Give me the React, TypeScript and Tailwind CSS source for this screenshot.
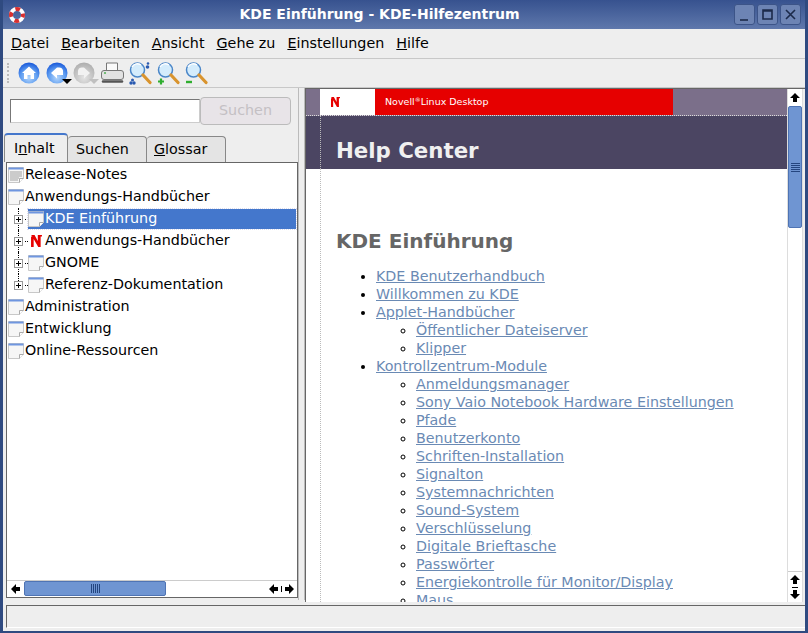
import React from "react";

const NLogo = ({ className }: { className?: string }) => (
  <svg viewBox="0 0 10 11" className={className}>
    <path d="M0 0h3.200l3 5.500V0H10v1.300H8.800V11H6.600L2.400 3.600V11H0V1.300h1.100V1.200z" fill="#e60000" />
  </svg>
);

const DocIcon = ({ lines }: { lines?: boolean }) => (
  <svg viewBox="0 0 16 16" className="w-4 h-4 shrink-0">
    <path d="M0.500 0.500h15v11l-4 4h-11z" fill="#f6f6f6" stroke="#c8c8c8" />
    <rect x="0.500" y="0.500" width="15" height="2" fill="#6f96e0" />
    {lines && <path d="M2 5h12M2 7h12M2 9h12M2 11h9M2 13h8" stroke="#a0a0a0" />}
    <path d="M11.500 15.500v-4h4" fill="#fff" stroke="#aaa" />
  </svg>
);

const Arrow = ({ dir }: { dir: "up" | "down" | "left" | "right" }) => {
  const d = {
    up: "M5 0l5 5H7v4H3V5H0z",
    down: "M3 0h4v4h3l-5 5-5-5h3z",
    left: "M0 5l5-5v3h4v4H5v3z",
    right: "M10 5l-5-5v3H1v4h4v3z",
  }[dir];
  return (
    <svg viewBox="0 0 10 10" className="w-[10px] h-[10px]">
      <path d={d} fill="#000" />
    </svg>
  );
};

const RoundIcon = ({ children, disabled }: { children: React.ReactNode; disabled?: boolean }) => (
  <svg viewBox="0 0 22 22" className="w-[22px] h-[22px] shrink-0">
    <defs>
      <radialGradient id="blueBall" cx="50%" cy="72%" r="68%">
        <stop offset="0" stopColor="#b4d6fb" />
        <stop offset="0.6" stopColor="#5c9bf0" />
        <stop offset="1" stopColor="#1f5fdc" />
      </radialGradient>
      <radialGradient id="greyBall" cx="50%" cy="72%" r="68%">
        <stop offset="0" stopColor="#e4e4e4" />
        <stop offset="1" stopColor="#b0b0b0" />
      </radialGradient>
    </defs>
    <circle cx="11" cy="11" r="10.500" fill={disabled ? "url(#greyBall)" : "url(#blueBall)"} />
    {children}
  </svg>
);

const Magnifier = ({ extra }: { extra?: React.ReactNode }) => (
  <svg viewBox="0 0 23 23" className="w-[23px] h-[23px]">
    <circle cx="8.500" cy="8" r="7" fill="#d4ecfc" stroke="#4a86c8" strokeWidth="1.500" />
    <path d="M3 5a6 6 0 0 1 9-2" stroke="#fff" strokeWidth="1.500" fill="none" />
    <path d="M14 13l7 7.500" stroke="#d9942e" strokeWidth="3.200" strokeLinecap="round" />
    {extra}
  </svg>
);

const ScrollGrip = ({ vertical }: { vertical?: boolean }) => (
  <div className={vertical ? "flex flex-col gap-[1px]" : "flex gap-[1px]"}>
    {[0, 1, 2, 3, 4].map((i) => (
      <div key={i} className={vertical ? "w-[9px] h-[1px] bg-[#24457f]" : "w-[1px] h-[9px] bg-[#24457f]"} />
    ))}
  </div>
);

const TreeRow = ({ label, lines }: { label: string; lines?: boolean }) => (
  <div className="flex items-center h-[22px] pl-[1px] text-black">
    <DocIcon lines={lines} />
    <span className="ml-[1px]">{label}</span>
  </div>
);

const ChildRow = ({ label, selected, novell, last }: { label: string; selected?: boolean; novell?: boolean; last?: boolean }) => (
  <div className="flex items-center h-[22px] pl-[7px]">
    <div className="w-[8px] h-[22px] relative shrink-0 flex items-center">
      <div className={last ? "w-px h-[11px] self-start ml-[4px] border-l border-dotted border-black" : "w-px h-[22px] ml-[4px] border-l border-dotted border-black"} />
      <div className="absolute left-0 top-[7px] w-[9px] h-[9px] border border-[#999] bg-white flex items-center justify-center text-[9px] leading-none">
        <div className="w-[5px] h-px bg-black" />
        <div className="absolute w-px h-[5px] bg-black" />
      </div>
    </div>
    <div className="w-[3px] ml-[3px] border-t border-dotted border-black shrink-0" />
    <div className={selected ? "flex items-center h-[20px] w-[268px] bg-[#4477cc] text-white outline-1 outline-dotted outline-[#dde]" : "flex items-center h-[20px] text-black"}>
      {novell ? (
        <div className="w-4 h-4 shrink-0 flex items-center justify-center"><NLogo className="w-[11px] h-[12px]" /></div>
      ) : (
        <DocIcon />
      )}
      <span className="ml-[1px]">{label}</span>
    </div>
  </div>
);

const LinkItem = ({ label, sub }: { label: string; sub?: string[] }) => (
  <li className="list-disc">
    <a className="underline text-[#6a8ab4]">{label}</a>
    {sub && (
      <ul className="pl-[40px]">
        {sub.map((s) => (
          <li key={s} className="list-[circle]">
            <a className="underline text-[#6a8ab4]">{s}</a>
          </li>
        ))}
      </ul>
    )}
  </li>
);

const menuItems: [string, string][] = [
  ["D", "atei"],
  ["B", "earbeiten"],
  ["A", "nsicht"],
  ["G", "ehe zu"],
  ["E", "instellungen"],
  ["H", "ilfe"],
];

export default function App() {
  return (
    <div className="w-[808px] h-[633px] overflow-hidden flex flex-col bg-[#eeeeee] text-[14.3px] border-x-[3px] border-b-[2px] border-[#2f4a80] font-['DejaVu_Sans',sans-serif]">
      {/* title bar */}
      <div className="h-[29px] shrink-0 -mx-[3px] flex items-center justify-between px-[9px] bg-gradient-to-b from-[#37528f] to-[#5f78ac] text-white font-bold text-[14px]">
        <svg viewBox="0 0 16 16" className="w-[16px] h-[16px]">
          <circle cx="8" cy="8" r="6" fill="none" stroke="#fff" strokeWidth="4" />
          <circle cx="8" cy="8" r="6" fill="none" stroke="#d93030" strokeWidth="4" strokeDasharray="4.700 4.700" strokeDashoffset="2.300" />
        </svg>
        <span>KDE Einführung - KDE-Hilfezentrum</span>
        <div className="flex gap-[2px] -mr-[2px]">
          {["M4 14h8", "M4 4h9v9H4zM4 5h9", "M4 4l9 9M13 4l-9 9"].map((d) => (
            <div key={d} className="w-[21px] h-[21px] rounded-[3px] border border-[#3c5488] bg-[#6d84b4] flex items-center justify-center">
              <svg viewBox="0 0 17 17" className="w-[17px] h-[17px]">
                <path d={d} stroke="#1c2a4a" strokeWidth="1.600" fill="none" />
              </svg>
            </div>
          ))}
        </div>
      </div>

      {/* menu */}
      <div className="h-[30px] shrink-0 flex items-center pl-[8px] pt-[1px] gap-[12px] border-b border-[#c8c8c8] text-black">
        {menuItems.map(([k, rest]) => (
          <span key={k}>
            <span className="underline">{k}</span>
            {rest}
          </span>
        ))}
      </div>

      {/* toolbar */}
      <div className="h-[29px] shrink-0 flex items-center pl-[4px] border-b border-[#c8c8c8]">
        <div className="w-[5px] h-[20px] mr-[6px] border-l-2 border-dotted border-[#bbb]" />
        <div className="w-[28px] flex">
          <RoundIcon><path d="M11 4.500l7 6.500h-2v6h-3.500v-4h-3v4H6v-6H4z" fill="#fff" /></RoundIcon>
        </div>
        <div className="w-[27px] flex items-end">
          <RoundIcon>
            <path d="M17 8.500a4 4 0 0 0-4-3H11L5 11l6 5.500v-3.500h6z" fill="#fff" />
          </RoundIcon>
          <svg viewBox="0 0 10 5" className="w-[10px] h-[5px] -ml-[6px] shrink-0"><path d="M0 0h10L5 5z" /></svg>
        </div>
        <div className="w-[28px] flex items-end">
          <RoundIcon disabled>
            <path d="M5 8.500a4 4 0 0 1 4-3H11l6 5.500-6 5.500v-3.500H5z" fill="#f2f2f2" />
          </RoundIcon>
          <svg viewBox="0 0 10 5" className="w-[10px] h-[5px] -ml-[6px] shrink-0"><path d="M0 0h10L5 5z" fill="#c0c0c0" /></svg>
        </div>
        <div className="w-[28px]">
          <svg viewBox="0 0 23 22" className="w-[23px] h-[22px]">
            <path d="M5.500 1h11v8h-11z" fill="#fafafa" stroke="#777" />
            <rect x="0.500" y="8.500" width="22" height="9" rx="2.500" fill="#e2e2e2" stroke="#777" />
            <path d="M3 11h2" stroke="#4caf50" strokeWidth="1.500" />
            <path d="M2 19.500h19" stroke="#555" strokeWidth="2.500" strokeLinecap="round" />
          </svg>
        </div>
        <div className="w-[28px]">
          <Magnifier extra={<g fill="#2a5ab0"><circle cx="19" cy="1.500" r="1.300" /><circle cx="18.500" cy="5" r="1.800" /><circle cx="3.500" cy="18" r="1.500" /><circle cx="2" cy="21" r="1.700" /><circle cx="5" cy="21" r="1.700" /></g>} />
        </div>
        <div className="w-[28px]">
          <Magnifier extra={<path d="M1 19.500h6M4 16.500v6" stroke="#2fae2f" strokeWidth="2.200" />} />
        </div>
        <div className="w-[27px]">
          <Magnifier extra={<path d="M1 20h6" stroke="#2fae2f" strokeWidth="2.400" />} />
        </div>
      </div>

      {/* main */}
      <div className="flex-1 min-h-0 flex">
        {/* left pane */}
        <div className="w-[295px] shrink-0 flex flex-col">
          <div className="h-[45px] shrink-0 flex items-center pl-[7px]">
            <input className="w-[190px] h-[24px] bg-white border border-[#777] border-b-[#ccc] border-r-[#ccc]" />
            <button className="w-[91px] h-[28px] rounded-[4px] border border-[#bbb] bg-[#e8e4e8] text-[#c4c0c4]">Suchen</button>
          </div>
          <div className="h-[29px] shrink-0 flex items-end pl-[1px]">
            <div className="h-[29px] w-[64px] pl-[9px] bg-[#eeeeee] rounded-t-[4px] border border-b-0 border-[#888] border-t-[2px] border-t-[#4477cc] flex items-center">
              <span>I<span className="underline">n</span>halt</span>
            </div>
            <div className="h-[26px] w-[79px] pl-[8px] bg-[#e4e4e4] rounded-t-[4px] border-r border-t border-[#888] flex items-center">
              Suchen
            </div>
            <div className="h-[26px] w-[79px] pl-[7px] bg-[#e4e4e4] rounded-t-[4px] border-r border-t border-[#888] flex items-center">
              <span><span className="underline">G</span>lossar</span>
            </div>
          </div>
          <div className="flex-1 min-h-0 ml-[3px] mb-[5px] border border-[#666] bg-white flex flex-col">
            <div className="flex-1 min-h-0 pt-[1px]">
              <TreeRow label="Release-Notes" lines />
              <TreeRow label="Anwendungs-Handbücher" />
              <ChildRow label="KDE Einführung" selected />
              <ChildRow label="Anwendungs-Handbücher" novell />
              <ChildRow label="GNOME" />
              <ChildRow label="Referenz-Dokumentation" last />
              <TreeRow label="Administration" />
              <TreeRow label="Entwicklung" />
              <TreeRow label="Online-Ressourcen" />
            </div>
            <div className="h-[16px] mb-[1px] shrink-0 flex items-stretch bg-white border-t border-[#ccc]">
              <div className="w-[17px] flex items-center justify-center"><Arrow dir="left" /></div>
              <div className="w-[142px] bg-[#6f95d2] border border-[#4f74b4] rounded-[2px] flex items-center justify-center"><ScrollGrip /></div>
              <div className="flex-1" />
              <div className="w-[31px] flex items-center justify-center gap-[2px]">
                <Arrow dir="left" />
                <div className="w-px h-[6px] bg-black" />
                <Arrow dir="right" />
              </div>
            </div>
          </div>
        </div>

        {/* splitter */}
        <div className="w-[7px] shrink-0 border-x border-[#bbb] mb-[3px]" />

        {/* right pane */}
        <div className="w-[500px] mb-[1px] flex border-l border-t border-[#666] bg-white overflow-hidden">
          <div className="flex-1 min-w-0 flex flex-col">
            <div className="h-[27px] shrink-0 flex bg-[#7b6f8a] border-b border-dotted border-[#ddd]">
              <div className="w-[14px]" />
              <div className="w-[55px] bg-white flex items-center pl-[11px]"><NLogo className="w-[9px] h-[10px]" /></div>
              <div className="w-[298px] bg-[#e60000] text-white text-[9.5px] flex items-center pl-[10px]">
                <span>Novell<span className="text-[6px] align-top">®</span>Linux Desktop</span>
              </div>
            </div>
            <div className="h-[53px] shrink-0 bg-[#4b4562] text-[#f0f0f0] font-bold text-[21.3px]">
              <div className="ml-[14px] h-full border-l border-dotted border-[#bbb] pl-[15px] pt-[21px] leading-[28px]">Help Center</div>
            </div>
            <div className="flex-1 min-h-0 overflow-hidden ml-[14px] border-l border-dotted border-[#bbb] pl-[15px] pt-[59px] text-[14.27px] leading-[18px]">
              <div className="text-[#666] font-bold text-[20px] leading-[26px] mb-[13px]">KDE Einführung</div>
              <ul className="pl-[40px]">
                <LinkItem label="KDE Benutzerhandbuch" />
                <LinkItem label="Willkommen zu KDE" />
                <LinkItem label="Applet-Handbücher" sub={["Öffentlicher Dateiserver", "Klipper"]} />
                <LinkItem
                  label="Kontrollzentrum-Module"
                  sub={[
                    "Anmeldungsmanager",
                    "Sony Vaio Notebook Hardware Einstellungen",
                    "Pfade",
                    "Benutzerkonto",
                    "Schriften-Installation",
                    "Signalton",
                    "Systemnachrichten",
                    "Sound-System",
                    "Verschlüsselung",
                    "Digitale Brieftasche",
                    "Passwörter",
                    "Energiekontrolle für Monitor/Display",
                    "Maus",
                  ]}
                />
              </ul>
            </div>
          </div>
          {/* vertical scrollbar */}
          <div className="w-[18px] shrink-0 pr-[2px] bg-[#eeeeee] flex">
            <div className="flex-1 flex flex-col bg-white border-x border-[#ddd]">
              <div className="h-[17px] flex items-center justify-center"><Arrow dir="up" /></div>
              <div className="h-[122px] bg-[#6f95d2] border border-[#4f74b4] rounded-[2px] flex items-center justify-center"><ScrollGrip vertical /></div>
              <div className="flex-1" />
              <div className="h-[31px] flex flex-col items-center justify-center gap-[2px] border-t border-[#ccc]">
                <Arrow dir="up" />
                <div className="w-[6px] h-px bg-black" />
                <Arrow dir="down" />
              </div>
            </div>
          </div>
        </div>
      </div>

      {/* status bar */}
      <div className="h-[23px] shrink-0 mt-[2px] mb-[3px] ml-[3px] border border-[#666] border-r-0 border-b-[#fff]" />
    </div>
  );
}
